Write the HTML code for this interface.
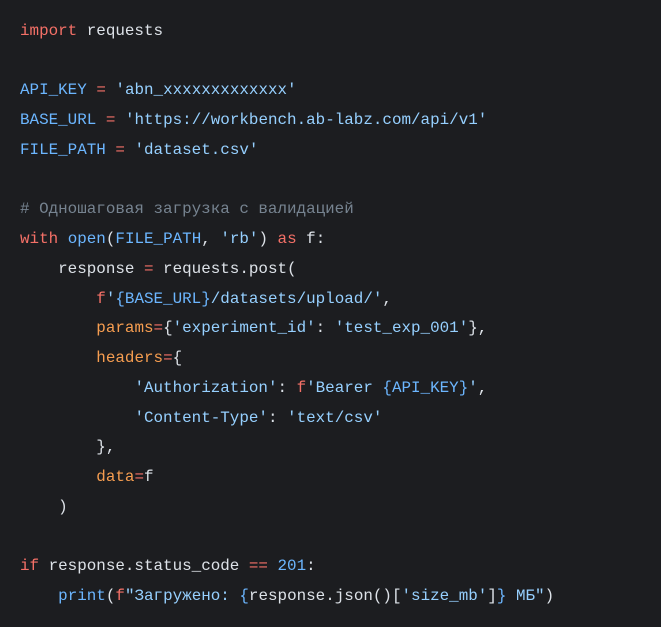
<!DOCTYPE html>
<html><head><meta charset="utf-8"><style>
html,body{margin:0;padding:0;background:#1c1d20;width:661px;height:627px;overflow:hidden}
pre{margin:0;position:absolute;left:20px;top:17px;font-family:"Liberation Mono","DejaVu Sans Mono",monospace;font-size:15.9px;line-height:29.74px;color:#dde2e8;white-space:pre}
.k{color:#f47067}.b{color:#6cb6ff}.s{color:#96d0ff}.c{color:#768390}.o{color:#f69d50}
</style></head><body><pre><span class="k">import</span> requests

<span class="b">API_KEY</span> <span class="k">=</span> <span class="s">'abn_xxxxxxxxxxxxx'</span>
<span class="b">BASE_URL</span> <span class="k">=</span> <span class="s">'https://workbench.ab-labz.com/api/v1'</span>
<span class="b">FILE_PATH</span> <span class="k">=</span> <span class="s">'dataset.csv'</span>

<span class="c"># Одношаговая загрузка с валидацией</span>
<span class="k">with</span> <span class="b">open</span>(<span class="b">FILE_PATH</span>, <span class="s">'rb'</span>) <span class="k">as</span> f:
    response <span class="k">=</span> requests.post(
        <span class="k">f</span><span class="s">'</span><span class="b">{BASE_URL}</span><span class="s">/datasets/upload/'</span>,
        <span class="o">params</span><span class="k">=</span>{<span class="s">'experiment_id'</span>: <span class="s">'test_exp_001'</span>},
        <span class="o">headers</span><span class="k">=</span>{
            <span class="s">'Authorization'</span>: <span class="k">f</span><span class="s">'Bearer </span><span class="b">{API_KEY}</span><span class="s">'</span>,
            <span class="s">'Content-Type'</span>: <span class="s">'text/csv'</span>
        },
        <span class="o">data</span><span class="k">=</span>f
    )

<span class="k">if</span> response.status_code <span class="k">==</span> <span class="b">201</span>:
    <span class="b">print</span>(<span class="k">f</span><span class="s">"Загружено: </span><span class="b">{</span>response.json()[<span class="s">'size_mb'</span>]<span class="b">}</span><span class="s"> МБ"</span>)</pre></body></html>
